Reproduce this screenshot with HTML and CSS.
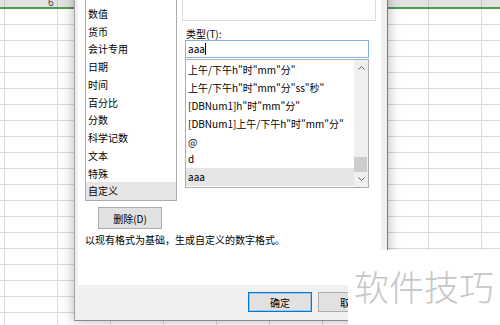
FILE: index.html
```html
<!DOCTYPE html>
<html lang="zh-CN">
<head>
<meta charset="utf-8">
<title>设置单元格格式</title>
<link rel="stylesheet" href="styles.css">
</head>
<body>
<div class="sheet">
  <div class="sheet-head"><span class="col-num">6</span></div>
  <div class="sheet-grid"></div>
</div>

<div class="dialog">
  <div class="panel">
    <div class="panel-main">
      <div class="left-col">
        <ul class="cat-list">
          <li>数值</li>
          <li>货币</li>
          <li>会计专用</li>
          <li>日期</li>
          <li>时间</li>
          <li>百分比</li>
          <li>分数</li>
          <li>科学记数</li>
          <li>文本</li>
          <li>特殊</li>
          <li class="sel">自定义</li>
        </ul>
        <button class="btn btn-del">删除(D)</button>
      </div>
      <div class="right-col">
        <div class="sample"></div>
        <div class="type-label">类型(T):</div>
        <div class="type-input">aaa<span class="caret"></span></div>
        <div class="type-list">
          <ul class="type-items">
            <li>上午/下午h"时"mm"分"</li>
            <li>上午/下午h"时"mm"分"ss"秒"</li>
            <li>[DBNum1]h"时"mm"分"</li>
            <li>[DBNum1]上午/下午h"时"mm"分"</li>
            <li>@</li>
            <li>d</li>
            <li class="sel">aaa</li>
          </ul>
          <div class="scrollbar">
            <div class="sb-btn"><svg width="7" height="5" viewBox="0 0 7 5"><polyline points="0.5,4.5 3.5,1.5 6.5,4.5" fill="none" stroke="#606060" stroke-width="1"/></svg></div>
            <div class="sb-track"><div class="sb-thumb"></div></div>
            <div class="sb-btn"><svg width="7" height="5" viewBox="0 0 7 5"><polyline points="0.5,0.5 3.5,3.5 6.5,0.5" fill="none" stroke="#606060" stroke-width="1"/></svg></div>
          </div>
        </div>
      </div>
    </div>
    <p class="desc">以现有格式为基础，生成自定义的数字格式。</p>
  </div>
  <div class="footer">
    <button class="btn btn-ok">确定</button>
    <button class="btn">取消</button>
  </div>
</div>

<div class="watermark">软件技巧</div>
</body>
</html>
```
FILE: styles.css
```css
html, body {
  margin: 0;
  padding: 0;
}
body {
  width: 500px;
  height: 325px;
  overflow: hidden;
  position: relative;
  background: #fff;
  font-family: "Microsoft YaHei", "Noto Sans CJK SC", "Noto Sans", sans-serif;
  font-size: 10px;
  color: #000;
}

/* spreadsheet background */
.sheet {
  height: 325px;
  display: flex;
  flex-direction: column;
}
.sheet-head {
  height: 7px;
  flex: none;
  overflow: hidden;
  display: flex;
  align-items: flex-end;
  background-color: #e3e3e3;
  background-image: linear-gradient(to right, transparent 52px, #c6c6c6 52px);
  background-size: 53px 100%;
  background-position: 5px 0;
  border-bottom: 2px solid #4e9c4e;
}
.col-num {
  margin-left: 48px;
  line-height: 10px;
  font-size: 10px;
  color: #444;
  font-family: "Noto Sans", sans-serif;
}
.sheet-grid {
  flex: 1;
  background-color: #fff;
  background-image:
    linear-gradient(to right, transparent 52px, #dadada 52px),
    linear-gradient(to bottom, transparent 15px, #dadada 15px);
  background-size: 53px 100%, 100% 16px;
  background-position: 5px 0, 0 0;
}

/* dialog window */
.dialog {
  position: absolute;
  left: 74px;
  top: -60px;
  width: 314px;
  height: 381px;
  box-sizing: border-box;
  border: 1px solid #a3a3a3;
  border-right-color: #7a7a7a;
  border-bottom-color: #8a8a8a;
  background: #f0f0f0;
  box-shadow: 0 0 12px rgba(0, 0, 0, 0.3);
  display: flex;
  flex-direction: column;
}
.panel {
  height: 344px;
  flex: none;
  margin: 0 6px 0 3px;
  padding: 0 5px 0 7px;
  box-sizing: border-box;
  background: #fff;
  display: flex;
  flex-direction: column;
}
.panel-main {
  display: flex;
}
.left-col {
  width: 92px;
  flex: none;
  margin-top: 45px;
  display: flex;
  flex-direction: column;
}
.cat-list {
  margin: 0;
  padding: 17.75px 0 0;
  list-style: none;
  height: 215px;
  box-sizing: border-box;
  border: 1px solid #acacac;
}
.cat-list li {
  height: 17.75px;
  line-height: 17.75px;
  padding-left: 2px;
  white-space: nowrap;
}
.sel {
  background: #e5e5e5;
}

.btn {
  font-family: inherit;
  font-size: 10px;
  color: #000;
  background: #e1e1e1;
  border: 1px solid #adadad;
  padding: 0;
  margin: 0;
  box-sizing: border-box;
  width: 64px;
  height: 20px;
}
.btn-del {
  height: 22px;
  margin: 6px 0 0 13px;
}
.btn-ok {
  border-color: #0078d7;
  box-shadow: inset 0 0 0 1px #9cc5ea;
}

.right-col {
  flex: 1;
  margin-left: 5px;
  display: flex;
  flex-direction: column;
}
.sample {
  margin-top: 30px;
  height: 50px;
  box-sizing: border-box;
  border: 1px solid #dcdcdc;
}
.type-label {
  padding: 6px 0 0 4px;
  line-height: 13px;
  height: 13px;
}
.type-input {
  margin: 0 7px 0 3px;
  height: 18px;
  box-sizing: border-box;
  border: 1px solid #7eb4ea;
  padding-left: 2px;
  display: flex;
  align-items: center;
  line-height: 16px;
}
.caret {
  width: 0;
  height: 12px;
  border-left: 1px solid #000;
}
.type-list {
  margin: 1px 7px 0 3px;
  height: 129px;
  box-sizing: border-box;
  border: 1px solid #acacac;
  display: flex;
}
.type-items {
  flex: 1;
  margin: 0;
  padding: 1px 0 0;
  list-style: none;
  overflow: hidden;
}
.type-items li {
  height: 17.9px;
  line-height: 17.9px;
  padding-left: 2px;
  white-space: nowrap;
}
.scrollbar {
  width: 14px;
  flex: none;
  background: #f0f0f0;
  display: flex;
  flex-direction: column;
}
.sb-btn {
  height: 15px;
  flex: none;
  display: flex;
  align-items: center;
  justify-content: center;
}
.sb-track {
  flex: 1;
  display: flex;
  flex-direction: column;
  justify-content: flex-end;
}
.sb-thumb {
  height: 15px;
  margin: 0 1px 0 0;
  background: #cdcdcd;
}

.desc {
  margin: 4px 0 0;
  line-height: 14px;
  white-space: nowrap;
}

.footer {
  flex: 1;
  display: flex;
  justify-content: flex-end;
  align-items: flex-start;
  gap: 6px;
  padding: 7px 5px 0 0;
}

/* watermark overlay */
.watermark {
  position: absolute;
  left: 348px;
  top: 250px;
  width: 152px;
  height: 75px;
  box-sizing: border-box;
  padding-left: 6px;
  background: #fff;
  color: #c6c6c6;
  font-family: "Noto Sans CJK SC", sans-serif;
  font-weight: 300;
  font-size: 35px;
  line-height: 71px;
  white-space: nowrap;
  overflow: hidden;
}
```
